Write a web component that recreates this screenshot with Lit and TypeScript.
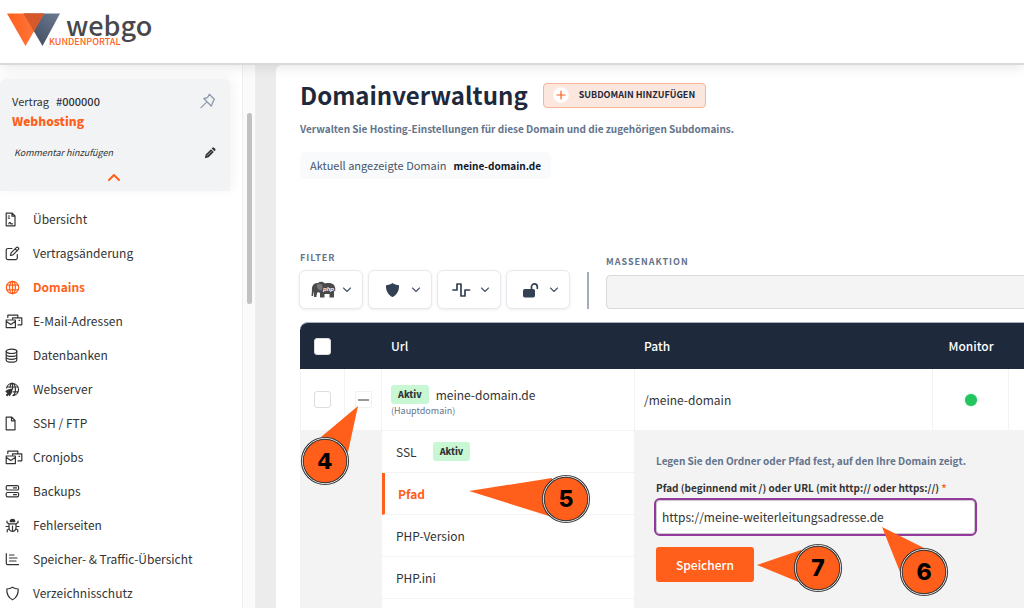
import { LitElement, html, svg, css } from "lit";
import { customElement } from "lit/decorators.js";
import { classMap } from "lit/directives/class-map.js";

type Drawing = ReturnType<typeof svg>;

const mailStack = svg`<path d="M2.800 3.500V1.200h10v1.800M7.500 4.800V3.800h9.300v7H13M1.200 6h9.200v7.600H1.200zM1.400 7.600l4.400 3 4.400-3M14 6.300h.6"/>`;

const icons: Record<string, Drawing> = {
  overview: svg`<path d="M1.200 1.200h6L10 4v9.800H1.200zM7 1.500V4.200H10M3.300 4h1.200M3.300 6.200h1.200M3.800 11.800c.8-1.800 1.500-1.800 2 0h1.800"/>`,
  edit: svg`<path d="M7 2.500H3A1.800 1.800 0 0 0 1.200 4.300v7.500A1.800 1.800 0 0 0 3 13.600h7.500a1.800 1.800 0 0 0 1.800-1.800V8.500M5.500 9.500l.6-2.600L11.300 1.700a1.200 1.200 0 0 1 1.900 1.900L8 8.900zM10.200 2.800l2 2"/>`,
  globe: svg`<circle cx="7.500" cy="7.500" r="6.200"/><ellipse cx="7.500" cy="7.500" rx="2.900" ry="6.200"/><path d="M1.800 5.200h11.400M1.800 9.800h11.400M7.500 1.300v12.400"/>`,
  mail: mailStack,
  database: svg`<ellipse cx="6.500" cy="3.300" rx="5.300" ry="2.200"/><path d="M1.200 3.300v8.600c0 1.200 2.400 2.200 5.300 2.200s5.300-1 5.300-2.200V3.300M1.200 6.200c0 1.200 2.400 2.200 5.300 2.200s5.300-1 5.300-2.200M1.200 9.100c0 1.200 2.400 2.200 5.300 2.200s5.300-1 5.300-2.200"/>`,
  webserver: svg`<path d="M1.500 6A6.100 6.100 0 1 1 8 13.600M5 5.500c.3-2.500 1.300-4.200 2.500-4.200 1.600 0 2.900 2.800 2.900 6.200S9.300 13 8 13.600M2 5h11.200M8 9.800h5.200M7.600 1.300V7"/><path fill="currentColor" d="M1 9.500l2-1.500 4-.8L6.200 11l-1.700 2.500-.5-2-1.800 2-.7-.7 1.700-1.700z"/>`,
  file: svg`<path d="M1.200 1.200h5.600L10 4.500v9.300H1.200zM6.500 1.500v3.300H10"/>`,
  server: svg`<rect x="1.200" y="1.700" width="12.400" height="4.300" rx="1.300"/><rect x="1.200" y="8.500" width="12.400" height="4.300" rx="1.300"/><path d="M8.500 3.900h3M8.500 10.700h3"/>`,
  bug: svg`<path fill="currentColor" d="M5.200 3.600a2.300 2.300 0 0 1 4.600 0z"/><path d="M4 5.800h7v4a3.500 3.500 0 0 1-7 0zM7.500 8v5M4 6L2 4.500V3M11 6l2-1.500V3M4 8.500H1M11 8.500h3M4.200 10.800L2.200 12v1.800M10.800 10.800l2 1.200v1.800"/>`,
  chart: svg`<path d="M1.300 1.500v9.800c0 .8.500 1.300 1.300 1.300h11M4.500 3h4.500M4.500 6h7.500M4.500 9h6.500"/>`,
  shield: svg`<path d="M7.500 1.200c1.800 1.100 3.500 1.600 5.700 1.800.2 5-1.500 8.700-5.700 10.800C3.300 11.700 1.600 8 1.800 3c2.200-.2 3.900-.7 5.700-1.800z"/>`,
};

interface NavEntry { label: string; icon: string; active?: boolean }

const navEntries: NavEntry[] = [
  { label: "Übersicht", icon: "overview" },
  { label: "Vertragsänderung", icon: "edit" },
  { label: "Domains", icon: "globe", active: true },
  { label: "E-Mail-Adressen", icon: "mail" },
  { label: "Datenbanken", icon: "database" },
  { label: "Webserver", icon: "webserver" },
  { label: "SSH / FTP", icon: "file" },
  { label: "Cronjobs", icon: "mail" },
  { label: "Backups", icon: "server" },
  { label: "Fehlerseiten", icon: "bug" },
  { label: "Speicher- & Traffic-Übersicht", icon: "chart" },
  { label: "Verzeichnisschutz", icon: "shield" },
];

const fontStack = css`"Noto Sans CJK SC", "Noto Sans", sans-serif`;

const base = css`
  * { box-sizing: border-box; }
  :host { display: block; font-family: ${fontStack}; }
  svg { display: block; flex: none; }
  button { font-family: inherit; padding: 0; border: 0; background: none; color: inherit; cursor: pointer; }
  a { color: inherit; text-decoration: none; }
  p, h1, h2 { margin: 0; padding: 0; }
`;

@customElement("portal-header")
class PortalHeader extends LitElement {
  static styles = [base, css`
    .bar { height: 65px; padding: 8px 4px; background: #fff; border-bottom: 2px solid #d9d9d9; }
    .logo { overflow: visible; }
    .name { font-family: ${fontStack}; font-size: 27px; font-weight: 500; fill: #48484a; }
    .tag { font-family: ${fontStack}; font-size: 9px; font-weight: 500; fill: #ff5f1b; }
  `];

  render() {
    return html`<header class="bar">
      <a href="#" aria-label="webgo Kundenportal">
        <svg class="logo" width="160" height="48" viewBox="0 0 160 48">
          <defs>
            <linearGradient id="o"><stop offset="0" stop-color="#ff5f1b"/><stop offset="1" stop-color="#ff7c45"/></linearGradient>
            <linearGradient id="s" x1="0" y1="1" x2="1" y2="0"><stop offset="0" stop-color="#3b4557"/><stop offset="1" stop-color="#6b7990"/></linearGradient>
          </defs>
          <path fill="url(#s)" d="M19.500 5.500H56L38.500 38z"/>
          <path fill="url(#o)" d="M3 5.500h37L21.500 38z"/>
          <path fill="#d5592a" d="M19.500 5.500H40L30 23.500z"/>
          <text class="name" x="62" y="28">webgo</text>
          <text class="tag" x="45" y="37">KUNDENPORTAL</text>
        </svg>
      </a>
    </header>`;
  }
}

@customElement("portal-sidebar")
class PortalSidebar extends LitElement {
  static styles = [base, css`
    :host { display: flex; background: #fff; color: #333; }
    .content { flex: 1; min-width: 0; padding-top: 14px; overflow: hidden; }
    .contract { margin-right: 12px; height: 112px; padding: 12px 14px 0 12px; background: #f2f3f5; border-radius: 6px 6px 0 0; box-shadow: 2px -2px 12px rgba(30, 41, 59, .06); font-size: 11px; line-height: 20px; }
    .row { display: flex; align-items: center; justify-content: space-between; }
    .number { font-weight: 500; margin-left: 7px; }
    .product { font-size: 12px; font-weight: 900; line-height: 20px; color: #ff5f1b; }
    .note { margin-top: 12px; font-size: 9px; font-style: italic; padding-left: 2px; }
    .toggle { display: block; margin: 10px auto 0; color: #ff5f1b; }
    .pin { color: #8f99ab; }
    .nav { margin-top: 11px; }
    .item { display: flex; align-items: center; height: 34px; padding-left: 5px; font-size: 12px; line-height: 20px; white-space: nowrap; }
    .item svg { fill: none; stroke: currentColor; stroke-width: 1.200px; stroke-linejoin: round; stroke-linecap: round; margin-right: 10px; }
    .item.active { color: #ff5f1b; font-weight: 700; }
    .track { width: 14px; padding: 48px 3px 0 4px; background: #fafafa; border: solid #eee; border-width: 0 1px; }
    .thumb { height: 191px; border-radius: 4px; background: #c1c1c1; }
  `];

  render() {
    return html`
      <div class="content">
        <section class="contract">
          <div class="row">
            <span>Vertrag<span class="number">#000000</span></span>
            <button class="pin" aria-label="Anheften">
              <svg width="16" height="16" viewBox="0 0 16 16" fill="none" stroke="currentColor" stroke-width="1.300" stroke-linejoin="round" stroke-linecap="round"><path d="M9.300 1.200l5 5-2.200 4.700-.6 2.300-7.700-7.700 3.700-.9zM6.200 9.600L1 14.600"/></svg>
            </button>
          </div>
          <h2 class="product">Webhosting</h2>
          <div class="row note">
            <span>Kommentar hinzufügen</span>
            <button aria-label="Kommentar bearbeiten">
              <svg width="12" height="12" viewBox="0 0 12 12" fill="currentColor"><path d="M.8 11.200l.9-3.700 5.300-5.300 2.800 2.800-5.300 5.300zM7.700 1.500L8.800.6q.7-.5 1.300.1l1.200 1.200q.6.600.1 1.300l-.9 1.100z"/><path d="M3 8.800L7.500 4.300" stroke="#f2f3f5" stroke-width=".6"/></svg>
            </button>
          </div>
          <button class="toggle" aria-label="Einklappen">
            <svg width="14" height="9" viewBox="0 0 14 9" fill="none" stroke="currentColor" stroke-width="2" stroke-linecap="round" stroke-linejoin="round"><path d="M2 7l5-5 5 5"/></svg>
          </button>
        </section>
        <nav class="nav">
          ${navEntries.map((e) => html`<a href="#" class=${classMap({ item: true, active: !!e.active })}>
            <svg width="18" height="15" viewBox="0 0 18 15">${icons[e.icon]}</svg>${e.label}</a>`)}
        </nav>
      </div>
      <div class="track"><div class="thumb"></div></div>`;
  }
}

const filters: { name: string; drawing: Drawing }[] = [
  { name: "PHP", drawing: svg`
    <path fill="#4a4a4a" d="M1 9C.5 5 3 1.500 7 2c2-1.800 5-1.500 7 .5 3-.9 7-.6 9 1.500 1.500 2 1.500 5 1 7l-1-2v7.500h-4.500V13h-5v3.500H9V12L7 11c-1 1-1.500 2.500-1.500 5H3c0-2 .2-4-.2-5.500L2 15H.5z"/>
    <path fill="#777" d="M6 3.500c2-1.500 5-1 5.500 1.500.4 2.200-.5 4-2 4.500C7 9 5.500 6 6 3.500z"/>
    <text x="12" y="9.500" fill="#fff" font-size="6" font-style="italic" font-weight="700" font-family="Liberation Sans, sans-serif">php</text>` },
  { name: "SSL", drawing: svg`<path fill="#334155" d="M12.500 2c2 1.500 4 2 6.500 2.200.3 5.300-2 9.600-6.500 11.800C8 13.800 5.700 9.500 6 4.200 8.500 4 10.500 3.500 12.500 2z"/>` },
  { name: "Monitor", drawing: svg`<path fill="none" stroke="#334155" stroke-width="1.700" stroke-linecap="round" stroke-linejoin="round" d="M4 9H8V3h4v12h4V9h4.500"/>` },
  { name: "Zugriff", drawing: svg`<rect x="5" y="8" width="12" height="8.500" rx="1.800" fill="#334155"/><path fill="none" stroke="#334155" stroke-width="1.700" stroke-linecap="round" d="M13.500 8V5.800a2.900 2.900 0 0 1 5.800 0V7.300"/>` },
];

@customElement("domain-table")
class DomainTable extends LitElement {
  static styles = [base, css`
    .table { width: 100%; border-collapse: separate; border-spacing: 0; table-layout: fixed; font-size: 12px; line-height: 20px; color: #333; }
    .c-check { width: 45px; } .c-fold { width: 37px; } .c-url { width: 253px; } .c-path { width: 298px; } .c-mon { width: 76px; }
    th { height: 47px; padding: 0 9px; background: #1e293b; color: #fff; font-weight: 500; text-align: left; border-top: 1px solid #a9b1bf; }
    th:first-child { border-top-left-radius: 8px; }
    td { height: 62px; padding: 0 9px; background: #fff; border: solid #f3f3f3; border-width: 0 1px 1px 0; vertical-align: middle; }
    td:first-child { border-left-width: 1px; }
    td.domain { padding-top: 3px; }
    .mid { text-align: center; }
    .tick { appearance: none; display: block; width: 17px; height: 17px; margin: 0 auto; border: 1px solid #ddd; border-radius: 3px; background: #fff; }
    .fold { display: grid; place-items: center; width: 17px; height: 17px; margin: 0 auto; border: 1px solid #f1f1f1; background: #fff; }
    .fold::before { content: ""; width: 11px; height: 2px; background: #999; }
    .url { display: flex; align-items: center; gap: 7px; line-height: 19px; }
    .badge { height: 19px; padding: 0 7px; border-radius: 3px; background: #c8f7d3; font-size: 9px; font-weight: 900; line-height: 19px; }
    .hint { font-size: 9px; line-height: 14px; color: #64748b; }
    .dot { display: block; width: 12px; height: 12px; margin: 0 auto; border-radius: 50%; background: #22c55e; box-shadow: 0 0 2px #86e0a8; }
    td.grey { background: #f3f3f3; vertical-align: top; }
    td.menu { height: 200px; padding: 0; vertical-align: top; }
    .tab { display: flex; align-items: center; gap: 16px; width: 100%; height: 42px; padding-left: 14px; border-bottom: 1px solid #f3f3f3; font-size: 12px; line-height: 20px; }
    .tab.active { border-left: 3px solid #ff5f1b; padding-left: 13px; color: #ff5f1b; font-weight: 700; }
    .form { padding: 20px 12px; display: grid; justify-items: start; }
    .intro { font-size: 10px; line-height: 20px; font-weight: 700; color: #64748b; }
    .label { margin-top: 7px; font-size: 10px; line-height: 20px; font-weight: 700; }
    .star { color: #ff5f1b; }
    .input { width: 323px; height: 38px; margin: 0 0 11px -2px; padding: 0 6px 2px; border: 2px solid #93399b; border-radius: 6px; background: #fff; outline: 0; box-shadow: inset 0 0 0 1px #ccc; font-family: inherit; font-size: 12px; color: #333; }
    .save { width: 98px; height: 35px; border-radius: 3px; background: #ff5f1b; color: #fff; font-size: 12px; font-weight: 500; line-height: 20px; }
  `];

  render() {
    const tabs = [
      { label: "SSL", badge: "Aktiv" },
      { label: "Pfad", active: true },
      { label: "PHP-Version" },
      { label: "PHP.ini" },
    ];
    return html`<table class="table">
      <colgroup><col class="c-check"><col class="c-fold"><col class="c-url"><col class="c-path"><col class="c-mon"><col></colgroup>
      <thead><tr>
        <th><input class="tick" type="checkbox" aria-label="Alle auswählen"></th><th></th>
        <th>Url</th><th>Path</th><th class="mid">Monitor</th><th></th>
      </tr></thead>
      <tbody>
        <tr>
          <td><input class="tick" type="checkbox" aria-label="meine-domain.de auswählen"></td>
          <td><button class="fold" aria-label="Zuklappen"></button></td>
          <td class="domain"><div class="url"><span class="badge">Aktiv</span>meine-domain.de</div><div class="hint">(Hauptdomain)</div></td>
          <td>/meine-domain</td>
          <td><span class="dot"></span></td>
          <td></td>
        </tr>
        <tr>
          <td class="grey" colspan="2"></td>
          <td class="menu">${tabs.map((t) => html`<button class=${classMap({ tab: true, active: !!t.active })}>
            ${t.label}${t.badge ? html`<span class="badge">${t.badge}</span>` : ""}</button>`)}</td>
          <td class="grey" colspan="3"><form class="form" @submit=${(e: Event) => e.preventDefault()}>
            <p class="intro">Legen Sie den Ordner oder Pfad fest, auf den Ihre Domain zeigt.</p>
            <label class="label" for="path">Pfad (beginnend mit /) oder URL (mit http:// oder https://) <span class="star">*</span></label>
            <input class="input" id="path" type="text" .value=${"https://meine-weiterleitungsadresse.de"}>
            <button class="save">Speichern</button>
          </form></td>
        </tr>
      </tbody>
    </table>`;
  }
}

@customElement("domain-page")
class DomainPage extends LitElement {
  static styles = [base, css`
    :host { background: #ececec; padding-left: 20px; overflow: hidden; }
    .panel { min-width: 860px; height: 100%; padding: 15px 24px 0 24px; background: #fff; border-radius: 6px 0 0 0; }
    .head { display: flex; align-items: center; gap: 15px; height: 30px; }
    .title { font-size: 24px; line-height: 30px; font-weight: 700; color: #1e293b; }
    .add { display: flex; align-items: center; gap: 10px; height: 25px; padding: 0 10px 0 9px; border: 1px solid #f7b499; border-radius: 4px; background: #fce7de; color: #1e293b; font-size: 9px; font-weight: 700; line-height: 14px; }
    .lead { margin-top: 9px; font-size: 10px; line-height: 20px; font-weight: 700; color: #64748b; }
    .current { display: inline-block; margin-top: 13px; padding: 3px 10px; border-radius: 5px; background: #f8fafc; font-size: 11px; line-height: 20px; color: #475569; }
    .current b { margin-left: 7px; color: #0f172a; font-size: 10px; font-weight: 700; }
    .tools { display: flex; align-items: flex-end; margin-top: 72px; }
    .caption { display: block; font-size: 9px; line-height: 14px; font-weight: 700; letter-spacing: 1px; color: #64748b; }
    .filters { display: flex; gap: 5px; margin: 5px 17px 0 -1px; }
    .filter { display: flex; align-items: center; justify-content: center; gap: 6px; width: 64px; height: 39px; border: 1px solid #e7e9ec; border-radius: 6px; background: #fff; box-shadow: 0 1px 3px rgba(30, 41, 59, .08); }
    .line { width: 2px; height: 37px; margin-right: 17px; background: #a3adbd; }
    .mass { flex: 1; }
    .select { appearance: none; display: block; width: 100%; height: 34px; margin-top: 6px; border: 1px solid #d8d8d8; border-radius: 4px; background: #f4f4f4; opacity: 1; }
    domain-table { margin-top: 13px; }
  `];

  render() {
    return html`<main class="panel">
      <div class="head">
        <h1 class="title">Domainverwaltung</h1>
        <button class="add">
          <svg width="16" height="16" viewBox="0 0 16 16"><circle cx="8" cy="8" r="7.800" fill="#fff"/><path d="M8 4v8M4 8h8" stroke="#ff5f1b" stroke-width="1.200" stroke-linecap="round"/></svg>
          SUBDOMAIN HINZUFÜGEN
        </button>
      </div>
      <p class="lead">Verwalten Sie Hosting-Einstellungen für diese Domain und die zugehörigen Subdomains.</p>
      <div class="current">Aktuell angezeigte Domain<b>meine-domain.de</b></div>
      <div class="tools">
        <div>
          <span class="caption">FILTER</span>
          <div class="filters">
            ${filters.map((f) => html`<button class="filter" aria-label=${f.name}>
              <svg width="25" height="18" viewBox="0 0 25 18">${f.drawing}</svg>
              <svg width="10" height="6" viewBox="0 0 10 6" fill="none" stroke="#475569" stroke-width="1.100" stroke-linecap="round" stroke-linejoin="round"><path d="M1.500 1L5 4.500 8.500 1"/></svg>
            </button>`)}
          </div>
        </div>
        <div class="line"></div>
        <div class="mass">
          <label class="caption" for="mass">MASSENAKTION</label>
          <select class="select" id="mass" disabled></select>
        </div>
      </div>
      <domain-table></domain-table>
    </main>`;
  }
}

interface Callout { n: string; x: number; y: number; points: string }

/* Pins on the canvas: x/y is the centre, points are relative to it. */
const callouts: Callout[] = [
  { n: "4", x: 325, y: 461, points: "33,-55 -4,-24 23,-9" },
  { n: "5", x: 566, y: 499, points: "-97,-8 -14,-21 -14,18" },
  { n: "6", x: 924, y: 572, points: "-42,-45 0,-24 -24,0" },
  { n: "7", x: 818, y: 568, points: "-61,-3 -17,-18 -17,15" },
];

@customElement("app-root")
class AppRoot extends LitElement {
  static styles = [base, css`
    :host { height: 100vh; overflow: hidden; position: relative; background: #fff; }
    .app { display: flex; flex-direction: column; height: 100%; }
    .body { flex: 1; min-height: 0; display: grid; grid-template-columns: 256px minmax(0, 1fr); }
    portal-header { z-index: 1; box-shadow: 0 2px 12px rgba(0, 0, 0, .1); }
    portal-sidebar, domain-page { min-height: 0; overflow: hidden; }
    .pins { position: absolute; left: 0; top: 0; width: 100%; height: 100%; pointer-events: none; z-index: 2; }
    .num { font-family: Inter, "Liberation Sans", sans-serif; font-size: 23px; font-weight: 800; text-anchor: middle; fill: #000; }
    .num.wide { font-family: "DejaVu Sans", sans-serif; font-size: 22px; font-weight: 700; }
  `];

  render() {
    return html`<div class="app">
        <portal-header></portal-header>
        <div class="body"><portal-sidebar></portal-sidebar><domain-page></domain-page></div>
      </div>
      <svg class="pins">
        ${callouts.map((c) => svg`<g transform="translate(${c.x} ${c.y})">
          <polygon points=${c.points} fill="#ff5f1b"/>
          <circle r="22.700" fill="#ff5f1b" stroke="#333" stroke-width="2.800"/>
          <circle r="22.700" fill="none" stroke="#ddd" stroke-width="1"/>
          <text class=${c.n === "4" ? "num wide" : "num"} y="8">${c.n}</text>
        </g>`)}
      </svg>`;
  }
}
